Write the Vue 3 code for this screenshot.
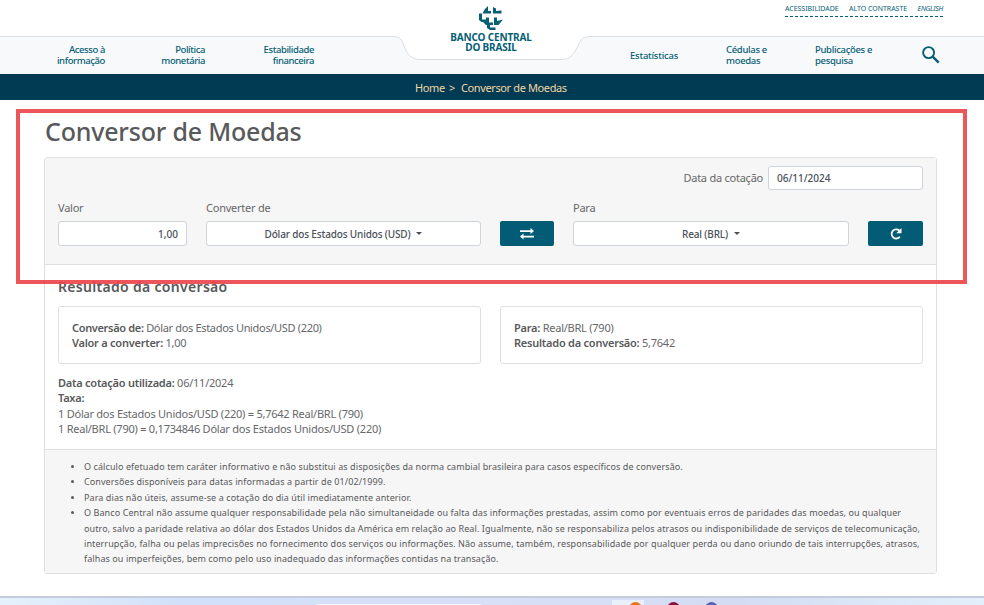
<script setup>
import { ref } from 'vue';

const valor = ref('1,00');
const dataCotacao = ref('06/11/2024');

const menuEsquerda = [
    { id: 'acesso', linhas: ['Acesso à', 'informação'] },
    { id: 'politica', linhas: ['Política', 'monetária'] },
    { id: 'estabilidade', linhas: ['Estabilidade', 'financeira'] }
];
const menuDireita = [
    { id: 'estatisticas', linhas: ['Estatísticas'] },
    { id: 'cedulas', linhas: ['Cédulas e', 'moedas'] },
    { id: 'publicacoes', linhas: ['Publicações e', 'pesquisa'] }
];
</script>

<template>
    <div class="page">
        <header class="top">
            <svg class="shape" width="984" height="74" viewBox="0 0 984 74">
                <path d="M-2 36.500H392C401 36.500 402 40 404 46C407 54 411 59.500 420 59.500H562C570 59.500 574 54 578 46C580 39 584 36.500 591 36.500H986V76H-2Z" fill="#f8f9fb" stroke="#dadfe3" />
            </svg>
            <div class="links">
                <a>ACESSIBILIDADE</a><a>ALTO CONTRASTE</a><a class="en">ENGLISH</a>
            </div>
            <nav class="menu left">
                <a v-for="item in menuEsquerda" :key="item.id" :class="item.id">
                    <span v-for="l in item.linhas" :key="l">{{ l }}</span>
                </a>
            </nav>
            <div class="logo">
                <svg width="26" height="26" viewBox="0 0 26 26" fill="#075f75">
                    <path d="M10 1V6H13V8.500H4.500Q6 4 10 1Z" />
                    <path d="M15 2L18 3.500V6L23.500 5.500V8.500H15Z" />
                    <path d="M1 8.500H4V14.500H8.500V17H3.500L1 15Z" />
                    <path d="M8 12.500H11V17.500H15V20H8L5 17H8Z" />
                    <path d="M16 12.500H19V16L25 14.500L20.500 20H16Z" />
                    <path d="M9 19.500H12V22.500H17.500V25H12L9 23Z" />
                </svg>
                <strong>BANCO CENTRAL</strong>
                <strong>DO BRASIL</strong>
            </div>
            <nav class="menu right">
                <a v-for="item in menuDireita" :key="item.id" :class="item.id">
                    <span v-for="l in item.linhas" :key="l">{{ l }}</span>
                </a>
                <svg class="search" width="18" height="18" viewBox="0 0 18 18" fill="none" stroke="#075f75">
                    <circle cx="6.600" cy="6.600" r="5.500" stroke-width="1.900" />
                    <path d="M10.700 10.700L16.700 16.700" stroke-width="2.500" />
                </svg>
            </nav>
        </header>
        <div class="breadcrumb"><a class="home">Home</a><i>&gt;</i><a class="atual">Conversor de Moedas</a></div>

        <main>
            <h1>Conversor de Moedas</h1>
            <section class="card">
                <form>
                    <div class="date-row">
                        <label for="data">Data da cotação</label>
                        <input id="data" type="text" v-model="dataCotacao">
                    </div>
                    <div class="fields">
                        <div>
                            <label for="valor">Valor</label>
                            <input id="valor" type="text" v-model="valor">
                        </div>
                        <div>
                            <label>Converter de</label>
                            <button type="button" class="select">Dólar dos Estados Unidos (USD)<b class="caret"></b></button>
                        </div>
                        <button type="button" class="action">
                            <svg width="14" height="12" viewBox="0 0 14 12" fill="#fff">
                                <path d="M0 2.200H10.500V0L14 3L10.500 6V3.900H0ZM14 7.700H3.500V5.500L0 8.500L3.500 11.500V9.400H14Z" />
                            </svg>
                        </button>
                        <div>
                            <label>Para</label>
                            <button type="button" class="select">Real (BRL)<b class="caret"></b></button>
                        </div>
                        <button type="button" class="action">
                            <svg width="12" height="12" viewBox="0 0 12 12">
                                <path d="M9.300 2.500A4.600 4.600 0 1 0 9.800 8.800" fill="none" stroke="#fff" stroke-width="1.800" />
                                <path d="M11.500 0V5.200H6.300Z" fill="#fff" />
                            </svg>
                        </button>
                    </div>
                </form>

                <div class="result">
                    <h2>Resultado da conversão</h2>
                    <div class="boxes">
                        <div class="box">
                            <p class="origem"><b>Conversão de:</b> Dólar dos Estados Unidos/USD (220)</p>
                            <p><b>Valor a converter:</b> 1,00</p>
                        </div>
                        <div class="box">
                            <p><b>Para:</b> Real/BRL (790)</p>
                            <p><b>Resultado da conversão:</b> 5,7642</p>
                        </div>
                    </div>
                    <div class="rates">
                        <p><b>Data cotação utilizada:</b> 06/11/2024</p>
                        <p><b>Taxa:</b></p>
                        <p>1 Dólar dos Estados Unidos/USD (220) = 5,7642 Real/BRL (790)</p>
                        <p>1 Real/BRL (790) = 0,1734846 Dólar dos Estados Unidos/USD (220)</p>
                    </div>
                </div>

                <ul class="notes">
                    <li>O cálculo efetuado tem caráter informativo e não substitui as disposições da norma cambial brasileira para casos específicos de conversão.</li>
                    <li>Conversões disponíveis para datas informadas a partir de 01/02/1999.</li>
                    <li>Para dias não úteis, assume-se a cotação do dia útil imediatamente anterior.</li>
                    <li>
                        O Banco Central não assume qualquer responsabilidade pela não simultaneidade ou falta das informações prestadas, assim como por eventuais erros de paridades das moedas, ou qualquer<br>
                        outro, salvo a paridade relativa ao dólar dos Estados Unidos da América em relação ao Real. Igualmente, não se responsabiliza pelos atrasos ou indisponibilidade de serviços de telecomunicação,<br>
                        interrupção, falha ou pelas imprecisões no fornecimento dos serviços ou informações. Não assume, também, responsabilidade por qualquer perda ou dano oriundo de tais interrupções, atrasos,<br>
                        falhas ou imperfeições, bem como pelo uso inadequado das informações contidas na transação.
                    </li>
                </ul>
            </section>
        </main>

        <footer class="taskbar">
            <div class="search-box"></div>
            <div class="apps">
                <i class="orange"></i><i class="red"></i><i class="blue"></i>
            </div>
        </footer>
        <div class="highlight"></div>
    </div>
</template>

<style>
body {
    margin: 0;
    overflow: hidden;
}
</style>

<style scoped>
* {
    box-sizing: border-box;
}
.page {
    position: relative;
    display: flex;
    flex-direction: column;
    width: 984px;
    height: 605px;
    overflow: hidden;
    background-color: #fff;
    color: #58595b;
    font-family: "Noto Sans", "Open Sans", sans-serif;
    font-size: 11px;
    letter-spacing: -0.24px;
    white-space: nowrap;
}
.top {
    position: relative;
    flex: none;
    display: grid;
    grid-template-columns: 403px 176px 405px;
    height: 74px;
    color: #075f75;
}
.shape {
    position: absolute;
    top: 0;
    left: 0;
}
.links {
    position: absolute;
    top: 3px;
    left: 785px;
    display: flex;
    justify-content: space-between;
    width: 158px;
    height: 14px;
    border-bottom: 1px dashed #075f75;
    font-size: 7px;
    line-height: 11px;
    letter-spacing: -0.03px;
}
.links .en {
    font-style: italic;
    letter-spacing: -0.25px;
}
.menu {
    position: relative;
    display: flex;
    align-items: center;
    height: 38px;
    margin-top: 36px;
    font-size: 9.5px;
    font-weight: 500;
    line-height: 11px;
    letter-spacing: -0.4px;
}
.menu a {
    display: flex;
    flex-direction: column;
}
.left a {
    align-items: flex-end;
}
.left .acesso {
    width: 105px;
}
.left .politica {
    width: 100px;
}
.left .estabilidade {
    width: 109px;
}
.right {
    letter-spacing: -0.32px;
}
.right .estatisticas {
    width: 96px;
    margin-left: 51px;
    letter-spacing: -0.22px;
}
.right .cedulas {
    width: 89px;
}
.right .publicacoes {
    width: 107px;
}
.logo {
    position: relative;
    display: flex;
    flex-direction: column;
    align-items: center;
    padding-top: 5px;
    font-size: 10px;
    line-height: 10px;
    letter-spacing: -0.16px;
}
.logo svg {
    margin-bottom: 1px;
}
.breadcrumb {
    flex: none;
    display: flex;
    height: 26px;
    padding-left: 415px;
    background-color: #003a53;
    color: #f3d6a4;
    line-height: 27px;
    letter-spacing: -0.38px;
}
.breadcrumb .home {
    width: 34px;
}
.breadcrumb i {
    width: 12px;
    font-style: normal;
}
main {
    flex: none;
    width: 893px;
    margin-left: 44px;
}
h1 {
    height: 57px;
    margin: 0;
    padding-left: 1px;
    font-size: 25px;
    font-weight: 500;
    line-height: 62px;
    letter-spacing: -0.2px;
}
.card {
    height: 417px;
    border: 1px solid #dedfe0;
    border-radius: 3px;
}
form {
    height: 107px;
    padding: 8px 13px 0;
    background-color: #f6f6f6;
    border-bottom: 1px solid #dedfe0;
}
label {
    color: #66676a;
}
.date-row {
    display: flex;
    justify-content: flex-end;
    gap: 5px;
    line-height: 24px;
}
input {
    display: block;
    height: 25px;
    padding: 0 8px;
    background-color: #fff;
    border: 1px solid #ced4da;
    border-radius: 3px;
    color: #495057;
    font: 500 10px "Noto Sans", sans-serif;
}
#data {
    width: 155px;
    height: 24px;
}
#valor {
    width: 129px;
    text-align: right;
}
.fields {
    display: grid;
    grid-template-columns: 129px 275px 54px 276px 55px;
    column-gap: 19px;
    justify-content: space-between;
    align-items: end;
    margin-top: 10px;
}
.fields label {
    display: block;
    height: 21px;
    line-height: 16px;
}
.select {
    display: flex;
    align-items: center;
    justify-content: center;
    gap: 6px;
    width: 100%;
    height: 25px;
    padding: 0;
    background-color: #fff;
    border: 1px solid #ced4da;
    border-radius: 3px;
    color: #495057;
    font: 500 10px "Noto Sans", sans-serif;
    letter-spacing: -0.16px;
}
.caret {
    border: 3px solid transparent;
    border-top-color: #495057;
    border-bottom: 0;
}
.action {
    display: flex;
    align-items: center;
    justify-content: center;
    height: 25px;
    padding: 0;
    background-color: #025c75;
    border: 0;
    border-radius: 2px;
}
.result {
    height: 185px;
    padding: 10px 13px 0;
    border-bottom: 1px solid #dedfe0;
}
h2 {
    margin: 0;
    font-size: 14px;
    font-weight: 600;
    line-height: 24px;
    letter-spacing: 0.31px;
}
.boxes {
    display: grid;
    grid-template-columns: 423px 423px;
    column-gap: 19px;
    margin-top: 7px;
}
.box {
    height: 58px;
    padding: 13px;
    border: 1px solid #dedfe0;
    border-radius: 3px;
}
p {
    margin: 0;
    color: #66676a;
    line-height: 15.4px;
}
p.origem {
    letter-spacing: -0.33px;
}
p b {
    color: #58595b;
    font-weight: 600;
}
.rates {
    margin-top: 11px;
}
.notes {
    height: 123px;
    margin: 0;
    padding: 9px 0 0 39px;
    background-color: #f6f6f6;
    font-size: 9px;
    line-height: 15.4px;
    letter-spacing: 0.087px;
}
.notes li::marker {
    font-size: 8px;
}
.taskbar {
    flex: none;
    display: flex;
    height: 9px;
    margin-top: 22px;
    overflow: hidden;
    background: linear-gradient(90deg, #e5f1fb, #d2e0f9 18%, #d8e0f8 50%, #d3dcf3 75%, #e3f0fb);
    border-top: 2px solid #c4cbda;
}
.search-box {
    width: 172px;
    height: 12px;
    margin: 6px 0 0 313px;
    background-color: #f2f5fc;
    border-radius: 6px;
}
.apps {
    display: flex;
    gap: 25px;
    width: 170px;
    height: 12px;
    margin: 2px 0 0 127px;
    padding: 2px 0 0 17px;
    background: linear-gradient(90deg, #eaf0fa 32px, transparent 32px);
}
.apps i {
    width: 13px;
    height: 13px;
    border-radius: 50%;
}
.apps .orange {
    background-color: #ed7318;
}
.apps .red {
    background-color: #8c1040;
}
.apps .blue {
    background-color: #5863b5;
}
/* red frame drawn over the converter form */
.highlight {
    position: absolute;
    top: 109px;
    left: 16px;
    width: 951px;
    height: 175px;
    border: 4px solid rgba(234, 66, 72, 0.9);
}
</style>
